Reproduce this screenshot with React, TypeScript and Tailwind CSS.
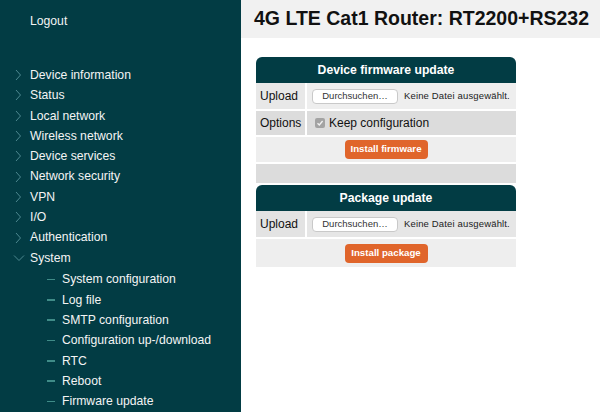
import React from "react";

const menu = [
  "Device information",
  "Status",
  "Local network",
  "Wireless network",
  "Device services",
  "Network security",
  "VPN",
  "I/O",
  "Authentication",
];

const sub = [
  "System configuration",
  "Log file",
  "SMTP configuration",
  "Configuration up-/download",
  "RTC",
  "Reboot",
  "Firmware update",
];

function ChevronRight() {
  return (
    <svg width="8" height="12" viewBox="0 0 8 12" className="shrink-0">
      <path d="M2 1 L6.5 6 L2 11" fill="none" stroke="#4d8890" strokeWidth="1" />
    </svg>
  );
}

function ChevronDown() {
  return (
    <svg width="12" height="8" viewBox="0 0 12 8" className="shrink-0">
      <path d="M1 1.5 L6 6.5 L11 1.5" fill="none" stroke="#4d8890" strokeWidth="1" />
    </svg>
  );
}

function FileInput() {
  return (
    <div className="flex items-center gap-[6px] pl-[5px]">
      <span className="flex h-[15px] w-[86px] items-center justify-center rounded-[4px] border border-[#c9c9c9] bg-white text-[9.5px] text-[#333]">
        Durchsuchen…
      </span>
      <span className="text-[9.5px] tracking-[0.15px] text-[#222]">Keine Datei ausgewählt.</span>
    </div>
  );
}

function OrangeButton({ label }: { label: string }) {
  return (
    <span className="flex h-[19px] w-[83px] items-center justify-center rounded-[4px] bg-[#e0652b] text-[9.7px] font-bold text-white">
      {label}
    </span>
  );
}

export default function App() {
  return (
    <div
      className="flex h-[412px] w-[600px] overflow-hidden bg-white"
      style={{ fontFamily: '"Liberation Sans", Arial, sans-serif' }}
    >
      <aside className="h-full w-[241px] shrink-0 bg-[#023c44] text-[12.2px] text-[#f4f4f4]">
        <div className="pl-[30px] pt-[11px] leading-[20px]">Logout</div>
        <ul className="mt-[34px] leading-[20.3px]">
          {menu.map((m) => (
            <li key={m} className="flex items-center">
              <span className="flex w-[30px] justify-end pr-[8px]">
                <ChevronRight />
              </span>
              <span>{m}</span>
            </li>
          ))}
          <li className="flex items-center">
            <span className="flex w-[30px] justify-end pr-[5px]">
              <ChevronDown />
            </span>
            <span>System</span>
          </li>
        </ul>
        <ul className="mt-[1.5px] leading-[20.3px]">
          {sub.map((s) => (
            <li key={s} className="flex items-center">
              <span className="ml-[47px] mr-[7px] h-[1.5px] w-[8px] bg-[#3f8c88]" />
              <span>{s}</span>
            </li>
          ))}
        </ul>
      </aside>

      <main className="flex-1">
        <header className="flex h-[38px] items-center bg-[#f1f1f1] pl-[13px] text-[19.5px] font-bold text-[#111]">
          4G LTE Cat1 Router: RT2200+RS232
        </header>

        <div className="flex w-[260px] flex-col gap-[2px] pl-[15px] pt-[19px] text-[12px] text-[#111]">
          <section className="flex w-[260px] flex-col">
            <div className="flex h-[26px] items-center justify-center rounded-t-[6px] bg-[#023c44] text-[12.2px] font-bold text-white">
              Device firmware update
            </div>
            <div className="flex flex-col gap-[2px]">
              <div className="grid h-[26px] grid-cols-[49px_1fr] gap-[2px]">
                <div className="flex items-center bg-[#e8e8e8] pl-[4px]">Upload</div>
                <div className="flex items-center bg-[#eeeeee]">
                  <FileInput />
                </div>
              </div>
              <div className="grid h-[24px] grid-cols-[49px_1fr] gap-[2px]">
                <div className="flex items-center bg-[#dcdcdc] pl-[4px]">Options</div>
                <div className="flex items-center gap-[4px] bg-[#dcdcdc] pl-[8px]">
                  <span className="flex h-[10px] w-[10px] items-center justify-center rounded-[2px] bg-[#a3a3a3]">
                    <svg width="8" height="8" viewBox="0 0 8 8">
                      <path d="M1.5 4.2 L3.3 6 L6.6 2" fill="none" stroke="#f2f2f2" strokeWidth="1.3" />
                    </svg>
                  </span>
                  <span>Keep configuration</span>
                </div>
              </div>
              <div className="flex h-[25px] items-center justify-center bg-[#eeeeee]">
                <OrangeButton label="Install firmware" />
              </div>
              <div className="h-[19px] bg-[#dcdcdc]" />
            </div>
          </section>

          <section className="flex w-[260px] flex-col">
            <div className="flex h-[26px] items-center justify-center rounded-t-[6px] bg-[#023c44] text-[12.2px] font-bold text-white">
              Package update
            </div>
            <div className="flex flex-col gap-[2px]">
              <div className="grid h-[26px] grid-cols-[49px_1fr] gap-[2px]">
                <div className="flex items-center bg-[#e3e3e3] pl-[4px]">Upload</div>
                <div className="flex items-center bg-[#e6e6e6]">
                  <FileInput />
                </div>
              </div>
              <div className="flex h-[28px] items-center justify-center bg-[#eeeeee]">
                <OrangeButton label="Install package" />
              </div>
            </div>
          </section>
        </div>
      </main>
    </div>
  );
}
